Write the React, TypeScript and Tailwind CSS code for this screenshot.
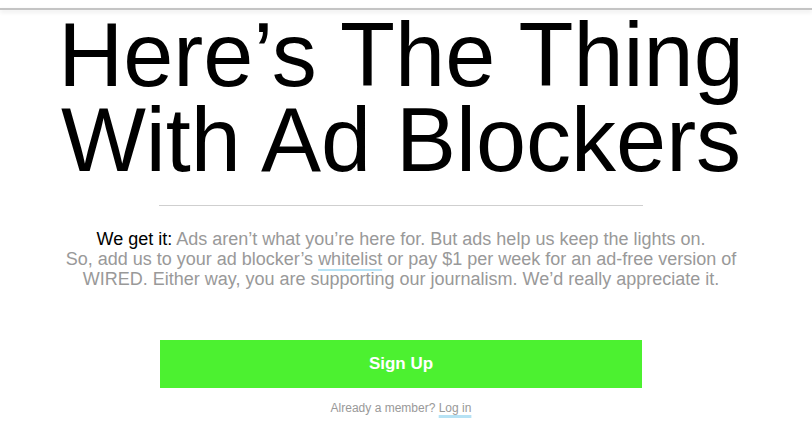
export default function App() {
  return (
    <div className="min-h-screen bg-white font-['Liberation_Sans',Arial,sans-serif]">
      {/* top edge of the overlay */}
      <div className="h-2 bg-white" />
      <div className="h-[2px] bg-[#c4c4c4] shadow-[0_2px_4px_rgba(0,0,0,0.12)]" />

      <main className="flex flex-col items-center pt-[3px] pr-[10px]">
        <h1 className="text-center text-[90px] leading-[85px] font-normal text-black">
          Here’s The Thing
          <br />
          With Ad Blockers
        </h1>

        <hr className="mt-[22px] w-[484px] border-0 border-t border-[#cfcfcf]" />

        <p className="mt-[23px] text-center text-[18px] leading-[20px] text-[#999999]">
          <span className="text-black">We get it:</span> Ads aren’t what you’re here for. But ads help us keep the lights on.
          <br />
          So, add us to your ad blocker’s{" "}
          <a href="#" className="text-[#999999] underline decoration-[#b6e2f4] decoration-2 underline-offset-[4px]">
            whitelist
          </a>{" "}
          or pay $1 per week for an ad-free version of
          <br />
          WIRED. Either way, you are supporting our journalism. We’d really appreciate it.
        </p>

        <button
          type="button"
          className="mt-[51px] h-12 w-[482px] bg-[#4cf130] text-[17px] font-bold text-white"
        >
          Sign Up
        </button>

        <p className="mt-3 text-[12px] leading-4 text-[#999999]">
          Already a member?{" "}
          <a href="#" className="text-[#999999] underline decoration-[#b6e2f4] decoration-[3px] underline-offset-[3px]">
            Log in
          </a>
        </p>
      </main>
    </div>
  );
}
